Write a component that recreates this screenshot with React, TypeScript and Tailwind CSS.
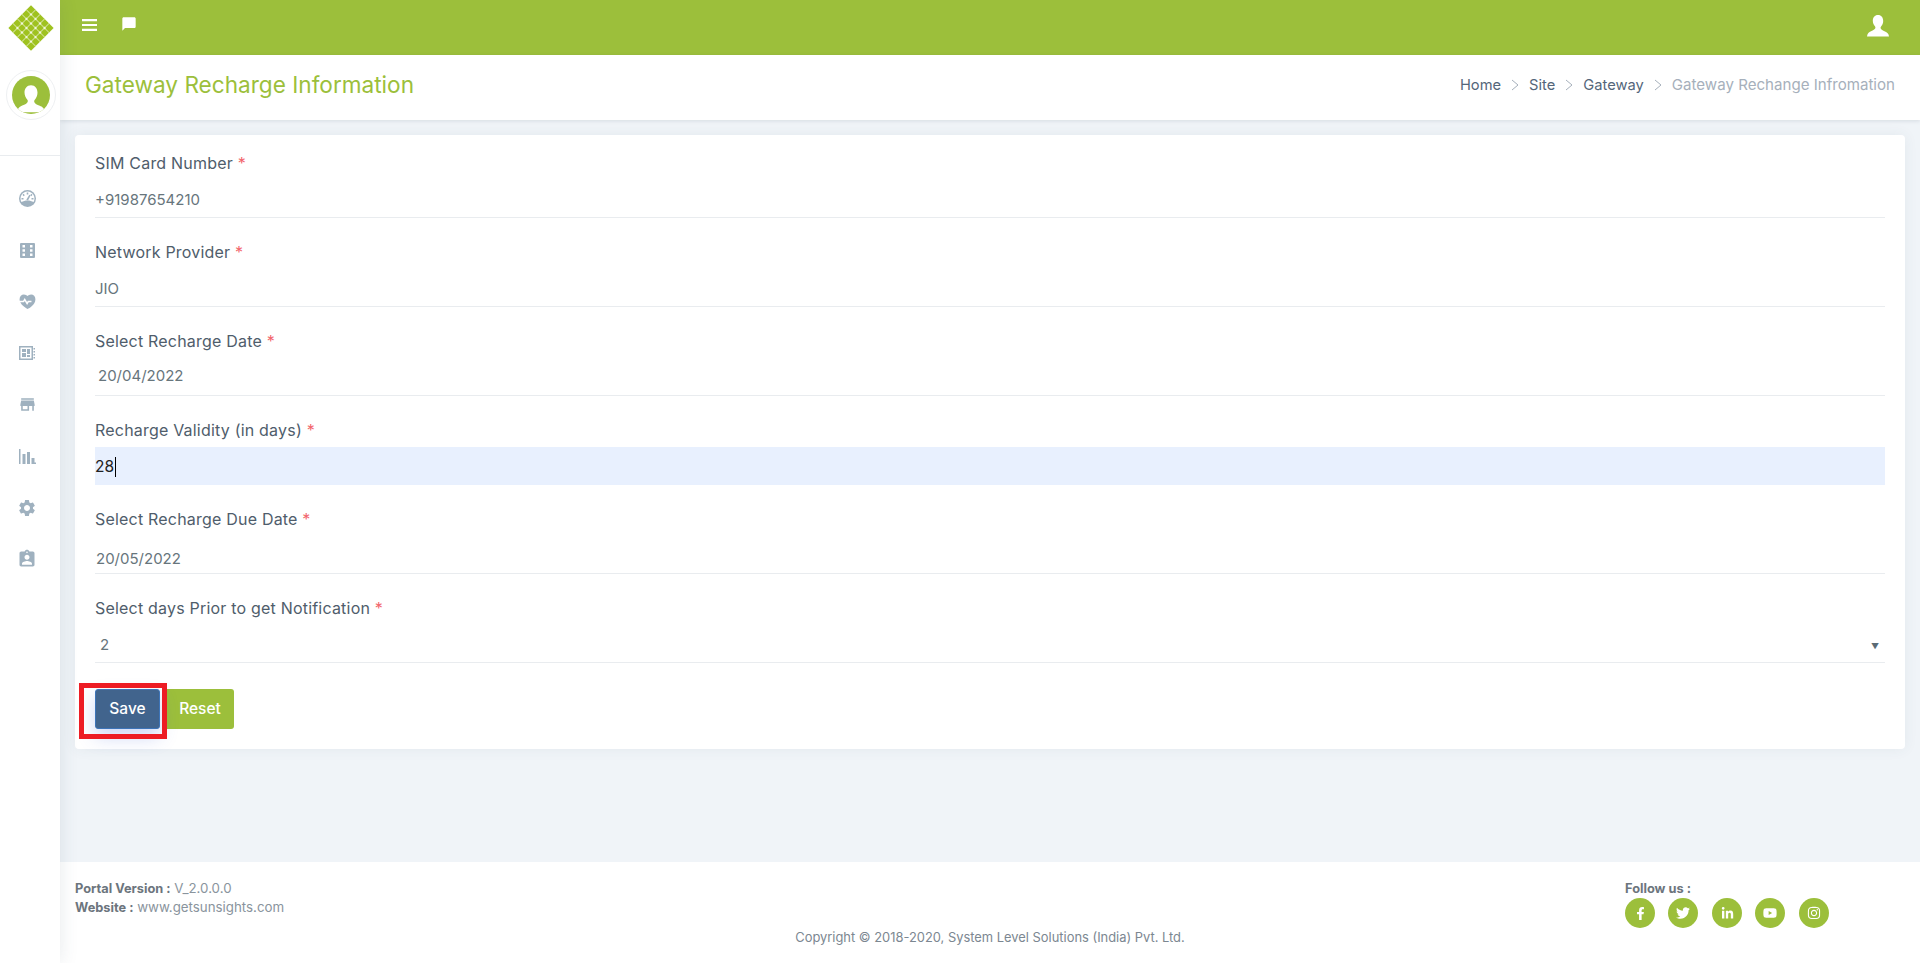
import { MdChatBubble, MdStore, MdSettings, MdAssignmentInd } from "react-icons/md";
import { FaFacebookF, FaTwitter, FaLinkedinIn, FaYoutube, FaInstagram } from "react-icons/fa";
import { RiHeartPulseFill } from "react-icons/ri";

function Logo() {
  const lines = [-9.6, -3.2, 3.2, 9.6];
  return (
    <svg width="46" height="46" viewBox="-23 -23 46 46">
      <g transform="rotate(45)">
        <rect x="-16" y="-16" width="32" height="32" fill="#9fc21f" />
        {lines.map((n) => (
          <g key={n} stroke="#cfe08f" strokeWidth="1">
            <line x1={n} y1="-16" x2={n} y2="16" />
            <line x1="-16" y1={n} x2="16" y2={n} />
          </g>
        ))}
        {lines.map((a) =>
          lines.map((b) => <rect key={`${a}${b}`} x={a - 1} y={b - 1} width="2" height="2" fill="#f1f6dc" />),
        )}
      </g>
    </svg>
  );
}

function Person({ size, color }: { size: number; color: string }) {
  return (
    <svg width={size} height={size} viewBox="0 0 24 24" fill={color}>
      <path d="M12 1c-3.3 0-5.2 2.600-5.200 5.800 0 2.300 1 4.400 2.300 5.700.4.500.4 1.200.2 1.800-.5 1.200-2 1.900-4.300 2.900C3 18.200 1.300 19.300 1 22.500h22c-.3-3.200-2-4.300-4-5.100-2.300-1-3.800-1.700-4.300-2.900-.2-.6-.2-1.300.2-1.800 1.300-1.300 2.300-3.400 2.300-5.700C17.200 3.600 15.300 1 12 1z" />
    </svg>
  );
}

function GaugeIcon() {
  return (
    <svg width="17" height="17" viewBox="0 0 17 17">
      <circle cx="8.500" cy="8.500" r="8.500" fill="#9fb1bf" />
      <path d="M2.400 12a7 7 0 1 1 12.200 0c-1.700-1.100-3.800-1.600-6.100-1.600s-4.400.5-6.100 1.600z" fill="#ffffff" />
      <path d="M7.700 2.500h1.600v2H7.700zM3.500 4.700l1.200-1 1.100 1.500-1.200 1zM12.300 3.700l1.200 1-1.100 1.500-1.200-1zM2.500 8h2v1.500h-2zM12.500 8h2v1.500h-2z" fill="#9fb1bf" />
      <path d="M7.300 9.800l3-5 1.300.7-2.600 5.100z" fill="#9fb1bf" />
    </svg>
  );
}

function GridIcon() {
  return (
    <svg width="15" height="15" viewBox="0 0 15 15">
      <path
        fillRule="evenodd"
        fill="#9fb1bf"
        d="M1 0h13a1 1 0 0 1 1 1v13a1 1 0 0 1-1 1H1a1 1 0 0 1-1-1V1a1 1 0 0 1 1-1zM2.500 2v2.500h2.500V2zM10 2v2.500h2.500V2zM2.500 6.200v2.500h2.500V6.200zM10 6.200v2.500h2.500V6.200zM2.500 10.500V13h2.500v-2.500zM10 10.500V13h2.500v-2.500z"
      />
    </svg>
  );
}

function BoardIcon() {
  return (
    <svg width="18" height="16" viewBox="0 0 18 16">
      <path
        fillRule="evenodd"
        fill="#9fb1bf"
        d="M1 1h14v14H1zM2.500 2.500v11h11v-11zM4 4h4v3H4zM9 4h3v5H9zM4 8h4v4H4zM9 10h3v2H9zM15.500 3H17v1.500h-1.500zM15.500 6H17v1.500h-1.500zM15.500 9H17v1.500h-1.500zM15.500 12H17v1.500h-1.500z"
      />
    </svg>
  );
}

function BarsIcon() {
  return (
    <svg width="17" height="16" viewBox="0 0 17 16" fill="#9fb1bf">
      <path d="M0 1h1.500v15H0zM3.500 6h3v10h-3zM8 4h3v12H8zM12.500 10h3v6h-3zM15.500 14.500H17V16h-1.500z" />
    </svg>
  );
}

function NavIcon({ children }: { children: React.ReactNode }) {
  return <div className="flex h-[51.5px] items-center justify-center">{children}</div>;
}

function Sidebar() {
  return (
    <aside className="z-20 flex w-[60px] shrink-0 flex-col bg-white shadow-[0_0_18px_rgba(60,80,100,0.12)]">
      <div className="flex h-[55px] items-center justify-center pl-px">
        <Logo />
      </div>
      <div className="flex justify-center pt-[15px] pl-[1px]">
        <div className="flex h-[50px] w-[50px] items-center justify-center rounded-full border border-[#eef0f2] bg-white">
          <div className="flex h-[38px] w-[38px] items-end justify-center overflow-hidden rounded-full bg-[#9cbf3b]">
            <Person size={30} color="#ffffff" />
          </div>
        </div>
      </div>
      <div className="mt-[35px] border-t border-[#e9ecef] pt-[17px]">
        <div className="pr-[6px]">
          <NavIcon><GaugeIcon /></NavIcon>
          <NavIcon><GridIcon /></NavIcon>
          <NavIcon><RiHeartPulseFill size={19} color="#9fb1bf" /></NavIcon>
          <NavIcon><BoardIcon /></NavIcon>
          <NavIcon><MdStore size={19} color="#9fb1bf" /></NavIcon>
          <NavIcon><BarsIcon /></NavIcon>
          <NavIcon><MdSettings size={20} color="#9fb1bf" /></NavIcon>
          <NavIcon><MdAssignmentInd size={20} color="#9fb1bf" /></NavIcon>
        </div>
      </div>
    </aside>
  );
}

function Chevron() {
  return (
    <svg width="8" height="12" viewBox="0 0 8 12" fill="none" stroke="#a6b0bb" strokeWidth="1">
      <path d="M1 1l6 5-6 5" />
    </svg>
  );
}

function Breadcrumb() {
  return (
    <nav className="flex items-center text-[14.7px] text-[#54667a]">
      <span>Home</span>
      <span className="mx-[10px]"><Chevron /></span>
      <span>Site</span>
      <span className="mx-[10px]"><Chevron /></span>
      <span>Gateway</span>
      <span className="mx-[10px]"><Chevron /></span>
      <span className="text-[15.1px] text-[#a6b0bb]">Gateway Rechange Infromation</span>
    </nav>
  );
}

type FieldProps = {
  label: string;
  value: string;
  valueClass?: string;
  children?: React.ReactNode;
};

function Field({ label, value, valueClass = "pt-[4px]", children }: FieldProps) {
  return (
    <div className="mb-[23px]">
      <div className="h-[22px] text-[16px] leading-[22px] tracking-[0.2px] text-[#4f5d6b]">
        {label} <span className="text-[#f2656c]">*</span>
      </div>
      <div className={`mt-[5px] flex h-[39px] items-center justify-between border-b border-[#e9ecef] text-[15px] text-[#67757c] ${valueClass}`}>
        <span>{value}</span>
        {children}
      </div>
    </div>
  );
}

function Form() {
  return (
    <div className="rounded-[4px] bg-white px-5 pt-[17px] pb-[20px] shadow-[0_0_14px_rgba(60,80,100,0.07)]">
      <Field label="SIM Card Number" value="+91987654210" />
      <Field label="Network Provider" value="JIO" />
      <Field label="Select Recharge Date" value="20/04/2022" valueClass="pl-[3px]" />
      <div className="mb-[23px]">
        <div className="h-[22px] text-[16px] leading-[22px] tracking-[0.2px] text-[#4f5d6b]">
          Recharge Validity (in days) <span className="text-[#f2656c]">*</span>
        </div>
        <div className="mt-[6px] flex h-[38px] items-center bg-[#e8f0fe] pt-px text-[15.5px] text-[#222222]">
          28<span className="ml-px h-[20px] w-px bg-black" />
        </div>
      </div>
      <Field label="Select Recharge Due Date" value="20/05/2022" valueClass="pl-px pt-[11px]" />
      <Field label="Select days Prior to get Notification" value="2" valueClass="pl-[5px] pr-[6px] pt-[5px]">
        <span className="text-[8px] text-[#5b6b75]">▼</span>
      </Field>
      <div className="flex pt-[3px]">
        <div className="relative">
          <button className="h-10 w-[65px] rounded-[3px] border border-[#3d74b8] bg-[#41648d] text-[15.5px] font-medium text-white shadow-[0_8px_18px_rgba(65,100,220,0.25)]">
            Save
          </button>
          <div className="absolute top-[-6px] left-[-16px] h-[56px] w-[88px] border-[5px] border-[#ed1c24]" />
        </div>
        <button className="ml-[3px] h-10 w-[71px] rounded-r-[3px] bg-[#9cbf3b] pl-[3px] text-[15.5px] font-medium text-white">
          Reset
        </button>
      </div>
    </div>
  );
}

const socials = [
  { key: "fb", icon: <FaFacebookF size={13} />, cls: "mr-[13px]" },
  { key: "tw", icon: <FaTwitter size={14} />, cls: "mr-[14px]" },
  { key: "in", icon: <FaLinkedinIn size={13} />, cls: "mr-[13px]" },
  { key: "yt", icon: <FaYoutube size={14} />, cls: "mr-[14px]" },
  { key: "ig", icon: <FaInstagram size={14} />, cls: "" },
];

function Footer() {
  return (
    <footer className="h-[101px] shrink-0 bg-white px-[15px] pt-[17px] text-[13.3px] text-[#8a949d]">
      <div className="flex justify-between">
        <div className="leading-[19px]">
          <div><b className="text-[12.8px] font-bold text-[#6c757d]">Portal Version :</b> V_2.0.0.0</div>
          <div><b className="text-[12.8px] font-bold text-[#6c757d]">Website :</b> www.getsunsights.com</div>
        </div>
        <div className="w-[280px]">
          <div className="text-[12.8px] leading-[19px] font-bold text-[#6c757d]">Follow us :</div>
          <div className="flex">
            {socials.map((s) => (
              <div key={s.key} className={`flex h-[30px] w-[30px] items-center justify-center rounded-full bg-[#9cbf3b] text-white ${s.cls}`}>
                {s.icon}
              </div>
            ))}
          </div>
        </div>
      </div>
      <div className="text-center text-[12.9px] text-[#7c8791]">
        Copyright © 2018-2020, System Level Solutions (India) Pvt. Ltd.
      </div>
    </footer>
  );
}

export default function App() {
  return (
    <div className="flex h-screen overflow-hidden bg-[#f0f4f8] font-['Inter',sans-serif]">
      <Sidebar />
      <div className="flex min-w-0 flex-1 flex-col">
        <header className="flex h-[55px] shrink-0 items-start justify-between bg-[#9cbf3b] pt-[17px] pr-[30px] pl-[22px] text-white">
          <div className="flex items-center gap-[24px]">
            <svg width="15" height="14" viewBox="0 0 15 14" fill="#ffffff">
              <path d="M0 1h15v2.200H0zM0 5.900h15v2.200H0zM0 10.800h15V13H0z" />
            </svg>
            <MdChatBubble size={16} className="mt-[-1px]" />
          </div>
          <div className="mt-[-3px]">
            <Person size={24} color="#ffffff" />
          </div>
        </header>
        <div className="flex h-[65px] shrink-0 items-center justify-between bg-white px-[25px] pb-[5px] shadow-[0_1px_4px_rgba(60,80,100,0.15)]">
          <h1 className="text-[22.6px] font-normal text-[#9cbf3b]">Gateway Recharge Information</h1>
          <Breadcrumb />
        </div>
        <main className="flex-1 px-[15px] pt-[15px]">
          <Form />
        </main>
        <Footer />
      </div>
    </div>
  );
}
